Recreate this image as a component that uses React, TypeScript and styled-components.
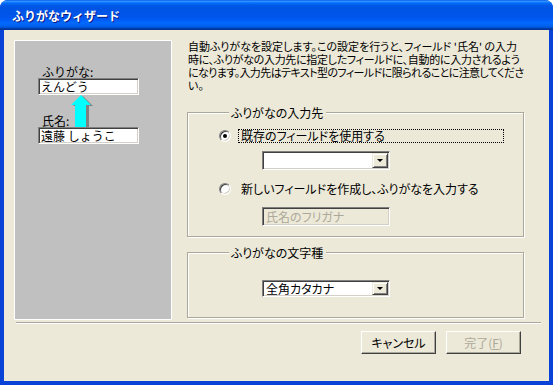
import React from 'react';
import styled, { createGlobalStyle } from 'styled-components';

const GlobalStyle = createGlobalStyle`
  html, body {
    margin: 0;
    padding: 0;
    background: #ffffff;
  }
  body {
    font-family: "Noto Sans CJK JP", "Noto Sans", sans-serif;
    font-size: 12px;
    color: #000000;
  }
`;

const Window = styled.div`
  width: 553px;
  height: 385px;
  display: flex;
  flex-direction: column;
  background: #0842d6;
  border-radius: 8px 8px 0 0;
  overflow: hidden;
  box-sizing: border-box;
`;

const TitleBar = styled.div`
  height: 30px;
  flex: none;
  display: flex;
  align-items: center;
  padding-left: 12px;
  padding-top: 2px;
  box-sizing: border-box;
  background: linear-gradient(
    to bottom,
    #0058ee 0%,
    #3593ff 4%,
    #288eff 6%,
    #127dff 8%,
    #036ffc 10%,
    #0262ee 14%,
    #0057e5 20%,
    #0054e3 24%,
    #0055eb 56%,
    #005bf5 66%,
    #026afe 76%,
    #0062ef 86%,
    #0052d6 92%,
    #0040ab 94%,
    #003092 100%
  );
`;

const TitleText = styled.span`
  color: #ffffff;
  font-weight: bold;
  font-size: 12px;
  line-height: 14px;
  text-shadow: 1px 1px 0 #0a1883;
`;

const Client = styled.div`
  flex: 1;
  margin: 0 4px 4px 4px;
  background: #ece9d8;
  display: flex;
  flex-direction: column;
  padding: 10px 0 0 10px;
  box-sizing: border-box;
`;

const TopRow = styled.div`
  display: flex;
  align-items: flex-start;
`;

const PreviewPanel = styled.div`
  width: 158px;
  height: 280px;
  box-sizing: border-box;
  background: #c0c0c0;
  border: 1px solid #ffffff;
  padding: 25px 0 0 23px;
  display: flex;
  flex-direction: column;
`;

const PanelLabel = styled.div`
  line-height: 12px;
  height: 12px;
  padding-left: 4px;
  white-space: nowrap;
`;

const PanelBox = styled.div`
  width: 101px;
  height: 17px;
  box-sizing: border-box;
  background: #ffffff;
  border: 1px solid;
  border-color: #808080 #ffffff #ffffff #808080;
  box-shadow: inset 1px 1px 0 #404040, inset -1px -1px 0 #d4d0c8;
  padding: 0 2px;
  line-height: 15px;
  white-space: nowrap;
`;

const ArrowRow = styled.div`
  display: grid;
  grid-template-columns: 32px 24px;
  height: 32px;
  align-items: end;
`;

const Right = styled.div`
  width: 343px;
  margin-left: 15px;
  display: flex;
  flex-direction: column;
`;

const Description = styled.div`
  padding-left: 1px;
  font-size: 11px;
  line-height: 13px;
  font-feature-settings: "palt";
`;

const Line = styled.div<{ $spacing: number }>`
  white-space: nowrap;
  letter-spacing: ${(p) => p.$spacing}px;
`;

const Group = styled.fieldset<{ $top: number; $padTop: number; $padBottom: number }>`
  margin: ${(p) => p.$top}px 0 0 0;
  width: 337px;
  box-sizing: border-box;
  min-width: 0;
  border: 1px solid #aca899;
  box-shadow: inset 1px 1px 0 #ffffff, 1px 1px 0 #ffffff;
  padding: ${(p) => p.$padTop}px 0 ${(p) => p.$padBottom}px 31px;
  display: flex;
  flex-direction: column;
`;

const Legend = styled.legend`
  margin-left: 10px;
  padding: 0 3px 0 2px;
  line-height: 13px;
  background: #ece9d8;
  font-feature-settings: "palt";
`;

const OptionRow = styled.div<{ $gap: number }>`
  display: flex;
  align-items: center;
  margin-top: ${(p) => p.$gap}px;
`;

const Radio = styled.span<{ $checked?: boolean }>`
  width: 12px;
  height: 12px;
  box-sizing: border-box;
  flex: none;
  border-radius: 50%;
  border: 1px solid;
  border-color: #808080 #ffffff #ffffff #808080;
  background: #ffffff;
  box-shadow: inset 1px 1px 0 #404040, inset -1px -1px 0 #d4d0c8;
  display: flex;
  align-items: center;
  justify-content: center;

  &::after {
    content: '';
    width: 4px;
    height: 4px;
    border-radius: 50%;
    background: ${(p) => (p.$checked ? '#000000' : 'transparent')};
  }
`;

const OptionLabel = styled.span<{ $focused?: boolean }>`
  margin-left: 7px;
  width: 266px;
  box-sizing: border-box;
  height: 14px;
  line-height: 12px;
  padding-left: 2px;
  border: 1px dotted ${(p) => (p.$focused ? '#000000' : 'transparent')};
  white-space: nowrap;
  font-feature-settings: "palt";
`;

const Combo = styled.div<{ $h: number; $gap: number }>`
  margin: ${(p) => p.$gap}px 0 0 43px;
  width: 128px;
  height: ${(p) => p.$h}px;
  box-sizing: border-box;
  background: #ffffff;
  border: 1px solid;
  border-color: #808080 #ffffff #ffffff #808080;
  box-shadow: inset 1px 1px 0 #404040, inset -1px -1px 0 #d4d0c8;
  padding: 1px;
  display: flex;
`;

const ComboText = styled.span`
  flex: 1;
  padding-left: 2px;
  line-height: 14px;
  white-space: nowrap;
  font-feature-settings: "palt";
`;

const DropButton = styled.span`
  width: 16px;
  flex: none;
  box-sizing: border-box;
  background: #ece9d8;
  border: 1px solid;
  border-color: #ece9d8 #404040 #404040 #ece9d8;
  box-shadow: inset 1px 1px 0 #ffffff, inset -1px -1px 0 #808080;
  display: flex;
  align-items: center;
  justify-content: center;

  &::after {
    content: '';
    width: 0;
    height: 0;
    border-left: 3px solid transparent;
    border-right: 3px solid transparent;
    border-top: 3px solid #000000;
  }
`;

const DisabledBox = styled.div`
  margin: 11px 0 0 43px;
  width: 128px;
  height: 19px;
  box-sizing: border-box;
  background: #ece9d8;
  border: 1px solid;
  border-color: #808080 #ffffff #ffffff #808080;
  box-shadow: inset 1px 1px 0 #404040, inset -1px -1px 0 #d4d0c8;
  padding: 0 3px;
  line-height: 17px;
  color: #aca899;
  white-space: nowrap;
  font-feature-settings: "palt";
`;

const Separator = styled.div`
  margin: 2px 0 0 2px;
  width: 525px;
  height: 1px;
  background: #aca899;
  border-bottom: 1px solid #ffffff;
`;

const ButtonRow = styled.div`
  display: flex;
  justify-content: flex-end;
  gap: 10px;
  margin-top: 7px;
  padding-right: 28px;
`;

const Button = styled.button<{ $disabled?: boolean }>`
  width: 75px;
  height: 23px;
  box-sizing: border-box;
  background: #ece9d8;
  border: 1px solid;
  border-color: #ffffff #404040 #404040 #ffffff;
  box-shadow: inset -1px -1px 0 #aca899;
  font-family: "Noto Sans CJK JP", "Noto Sans", sans-serif;
  font-size: 12px;
  line-height: 14px;
  padding: 0;
  color: ${(p) => (p.$disabled ? '#aca899' : '#000000')};
  font-feature-settings: "palt";
`;

const Arrow = () => (
  <svg width="24" height="32" viewBox="0 0 24 32">
    <polygon points="13,1 23,11 19,11 19,32 8,32 8,11 3,11" fill="#808080" />
    <polygon points="11,0 21,10 16,10 16,32 5,32 5,10 1,10" fill="#00ffff" />
  </svg>
);

export default function App() {
  return (
    <>
      <GlobalStyle />
      <Window>
        <TitleBar>
          <TitleText>ふりがなウィザード</TitleText>
        </TitleBar>
        <Client>
          <TopRow>
            <PreviewPanel>
              <PanelLabel>ふりがな:</PanelLabel>
              <PanelBox>えんどう</PanelBox>
              <ArrowRow>
                <PanelLabel>氏名:</PanelLabel>
                <Arrow />
              </ArrowRow>
              <PanelBox>遠藤 しょうこ</PanelBox>
            </PreviewPanel>
            <Right>
              <Description>
                <Line $spacing={0}>自動ふりがなを設定します。この設定を行うと、フィールド '氏名' の入力</Line>
                <Line $spacing={-0.3}>時に、ふりがなの入力先に指定したフィールドに、自動的に入力されるよう</Line>
                <Line $spacing={-0.6}>になります。入力先はテキスト型のフィールドに限られることに注意してくださ</Line>
                <Line $spacing={0}>い。</Line>
              </Description>
              <Group $top={14} $padTop={10} $padBottom={10}>
                <Legend>ふりがなの入力先</Legend>
                <OptionRow $gap={0}>
                  <Radio $checked />
                  <OptionLabel $focused>既存のフィールドを使用する</OptionLabel>
                </OptionRow>
                <Combo $h={19} $gap={8}>
                  <ComboText />
                  <DropButton />
                </Combo>
                <OptionRow $gap={12}>
                  <Radio />
                  <OptionLabel>新しいフィールドを作成し、ふりがなを入力する</OptionLabel>
                </OptionRow>
                <DisabledBox>氏名のフリガナ</DisabledBox>
              </Group>
              <Group $top={9} $padTop={21} $padBottom={20}>
                <Legend>ふりがなの文字種</Legend>
                <Combo $h={17} $gap={0}>
                  <ComboText>全角カタカナ</ComboText>
                  <DropButton />
                </Combo>
              </Group>
            </Right>
          </TopRow>
          <Separator />
          <ButtonRow>
            <Button>キャンセル</Button>
            <Button $disabled>
              完了(<u>F</u>)
            </Button>
          </ButtonRow>
        </Client>
      </Window>
    </>
  );
}
